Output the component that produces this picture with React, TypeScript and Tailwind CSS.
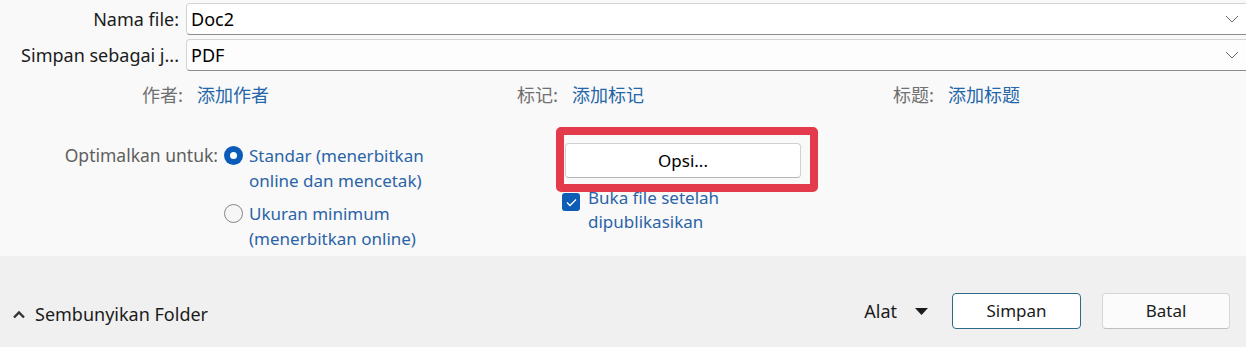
const FONT = "font-['Noto_Sans','Noto_Sans_CJK_SC',sans-serif]"

function ChevronDown() {
  return (
    <svg width="14" height="8" viewBox="0 0 14 8" className="shrink-0">
      <polyline points="1,1 7,7 13,1" fill="none" stroke="#6a6a6a" strokeWidth="1" />
    </svg>
  )
}

function FieldRow({ label, value, select }: { label: string; value: string; select?: boolean }) {
  return (
    <div className="flex items-center">
      <div className="w-[181px] pr-[2px] text-right text-[18px] text-[#1b1b1b] whitespace-nowrap">{label}</div>
      <div
        className={`ml-[5px] -mr-[4px] flex h-[32px] flex-1 items-center justify-between rounded-[4px] border border-[#d4d4d4] border-b-[#8c8c8c] pl-[4px] pr-[10px] text-[18px] text-black ${
          select ? 'bg-[#fdfdfd]' : 'bg-white'
        }`}
      >
        <span>{value}</span>
        <ChevronDown />
      </div>
    </div>
  )
}

function Meta({ label, value, width }: { label: string; value: string; width?: string }) {
  return (
    <div className={`flex items-center gap-[14px] ${width ?? ''}`}>
      <span className="text-[#707070]">{label}</span>
      <span className="text-[#2466a8]">{value}</span>
    </div>
  )
}

function Radio({ checked }: { checked?: boolean }) {
  if (checked)
    return (
      <span className="mt-[3px] flex h-[19px] w-[19px] shrink-0 items-center justify-center rounded-full bg-[#0b5cb8]">
        <span className="h-[7px] w-[7px] rounded-full bg-white" />
      </span>
    )
  return <span className="mt-[3px] h-[19px] w-[19px] shrink-0 rounded-full border border-[#858585] bg-[#f6f6f6]" />
}

export default function App() {
  return (
    <div className={`flex h-[347px] w-[1246px] flex-col overflow-hidden ${FONT}`}>
      <div className="flex h-[256px] flex-col bg-[#f9f9f9] pt-[3px]">
        <FieldRow label="Nama file:" value="Doc2" />
        <div className="mt-[4px]">
          <FieldRow label="Simpan sebagai j..." value="PDF" select />
        </div>

        <div className="mt-[10px] flex items-center pl-[142px] text-[18px] font-['Noto_Sans_CJK_SC',sans-serif]">
          <Meta label="作者:" value="添加作者" width="w-[375px]" />
          <Meta label="标记:" value="添加标记" width="w-[376px]" />
          <Meta label="标题:" value="添加标题" />
        </div>

        <div className="mt-[35px] flex">
          <div className="w-[218px] text-right text-[17.5px] leading-[25px] text-[#5f5f5f]">Optimalkan untuk:</div>
          <div className="ml-[6px] flex w-[332px] flex-col gap-[8px] text-[17px] leading-[25px] text-[#2b64a6]">
            <div className="flex gap-[6px]">
              <Radio checked />
              <div>
                <div>Standar (menerbitkan</div>
                <div>online dan mencetak)</div>
              </div>
            </div>
            <div className="flex gap-[6px]">
              <Radio />
              <div>
                <div>Ukuran minimum</div>
                <div>(menerbitkan online)</div>
              </div>
            </div>
          </div>
          <div className="ml-[6px] flex flex-col">
            <div className="relative ml-[3px]">
              <button className="flex h-[35px] w-[236px] items-center justify-center rounded-[4px] border border-[#d0d0d0] border-b-[#b5b5b5] bg-white text-[17px] text-black">
                Opsi...
              </button>
              <div className="absolute left-[-9px] top-[-16px] z-10 h-[65px] w-[262px] rounded-[5px] border-[8px] border-[#e33b4c]" />
            </div>
            <div className="mt-[8px] flex gap-[8px] text-[17px] leading-[24px] text-[#2b64a6]">
              <span className="mt-[7px] flex h-[18px] w-[18px] shrink-0 items-center justify-center rounded-[3px] bg-[#0d5db6]">
                <svg width="11" height="9" viewBox="0 0 11 9">
                  <polyline points="1,4.5 4,7.5 10,1.5" fill="none" stroke="white" strokeWidth="1.3" />
                </svg>
              </span>
              <div>
                <div>Buka file setelah</div>
                <div>dipublikasikan</div>
              </div>
            </div>
          </div>
        </div>
      </div>

      <div className="flex flex-1 bg-[#f0f0f0] pt-[37px]">
        <div className="ml-[12px] mt-[8px] flex h-[26px] items-center gap-[9px] text-[18px] text-[#1b1b1b]">
          <svg width="14" height="9" viewBox="0 0 14 9">
            <polyline points="2,7.5 7,2.5 12,7.5" fill="none" stroke="#333" strokeWidth="2.4" />
          </svg>
          <span>Sembunyikan Folder</span>
        </div>
        <div className="ml-auto mr-[16px] flex h-[36px] items-center">
          <span className="text-[18px] text-[#1b1b1b]">Alat</span>
          <svg width="13" height="7" viewBox="0 0 13 7" className="ml-[18px]">
            <polygon points="0,0 13,0 6.5,7" fill="#1b1b1b" />
          </svg>
          <button className="ml-[24px] flex h-[36px] w-[129px] items-center justify-center rounded-[4px] border border-[#2d6a8a] bg-white text-[17px] text-[#1b1b1b]">
            Simpan
          </button>
          <button className="ml-[21px] flex h-[36px] w-[128px] items-center justify-center rounded-[4px] border border-[#d6d6d6] border-b-[#c0c0c0] bg-[#fbfbfb] text-[17px] text-[#1b1b1b]">
            Batal
          </button>
        </div>
      </div>
    </div>
  )
}
